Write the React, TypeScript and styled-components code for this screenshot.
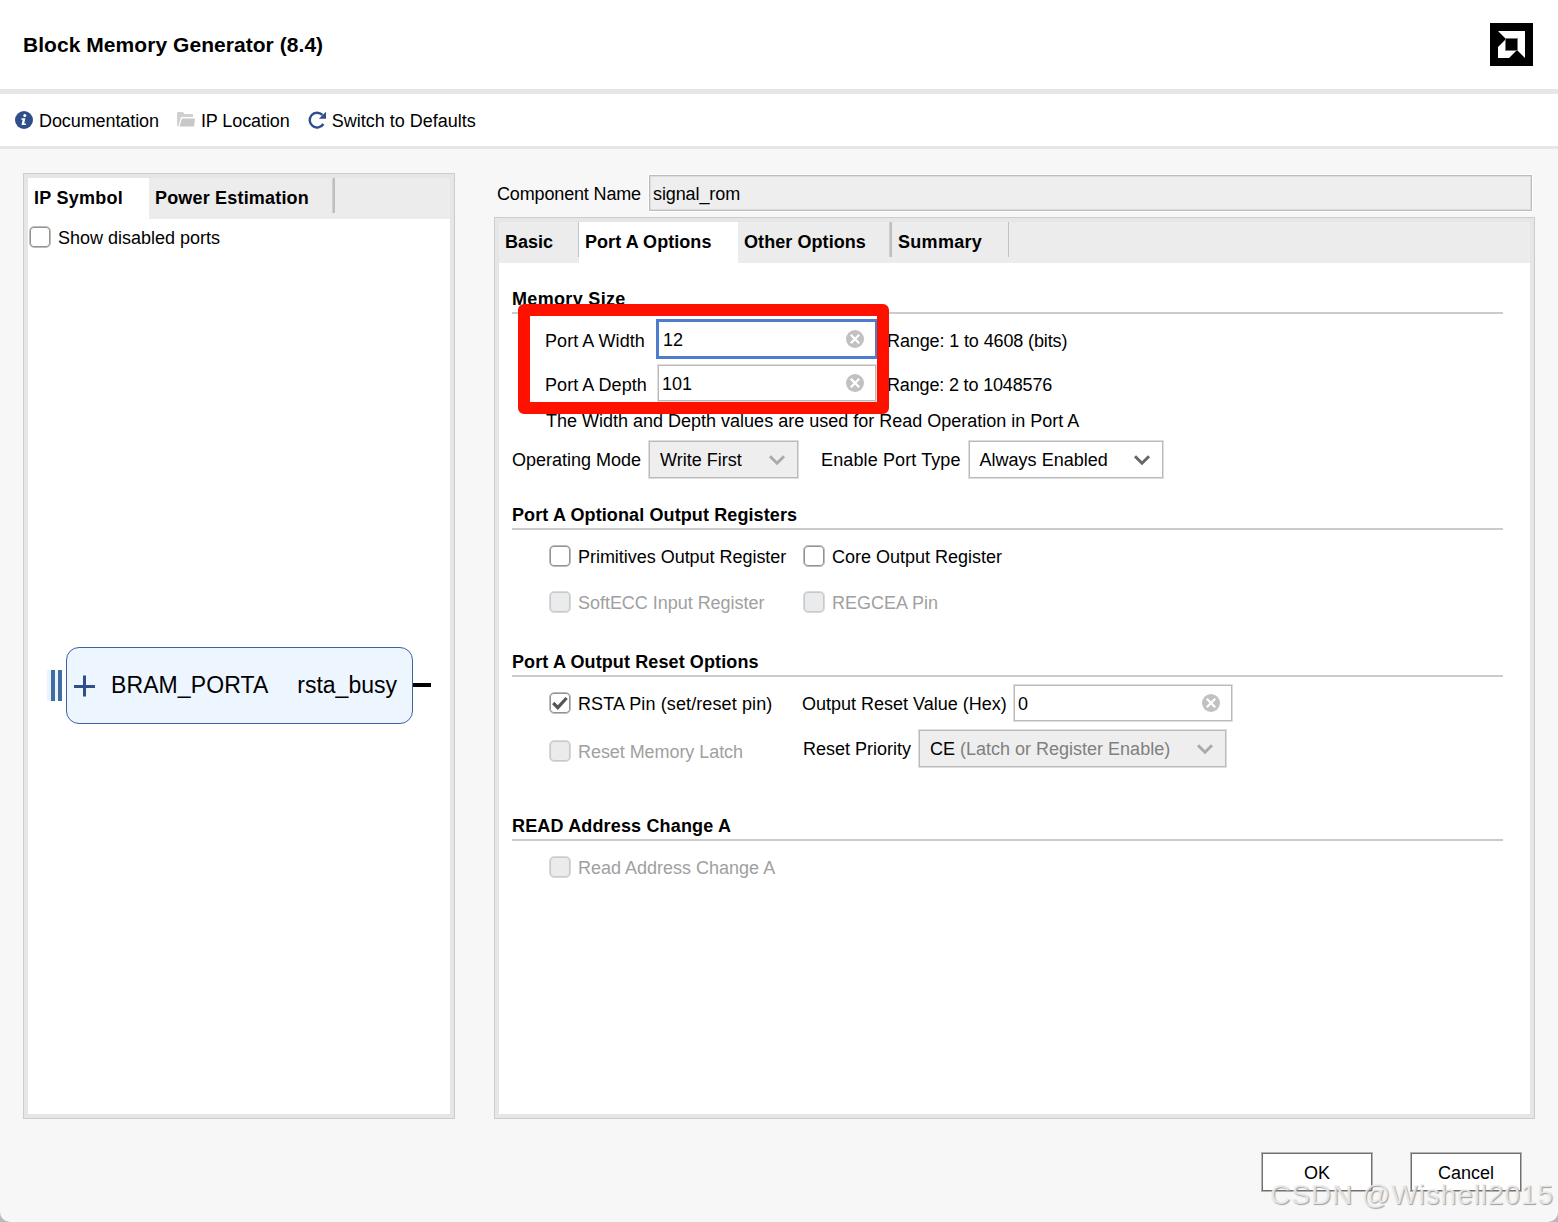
import React from "react";
import styled, { createGlobalStyle } from "styled-components";

const GlobalStyle = createGlobalStyle`
  * { box-sizing: border-box; }
  body { margin: 0; background: #b9b9b9; }
`;

const Dialog = styled.div`
  position: relative;
  display: flex;
  flex-direction: column;
  width: 1558px;
  height: 1222px;
  overflow: hidden;
  background: #f7f7f7;
  border-radius: 0 0 10px 10px;
  font-family: "Liberation Sans", Arial, sans-serif;
  font-size: 18px;
  line-height: 22px;
  color: #000;
  white-space: nowrap;
`;

const Header = styled.header`
  display: flex;
  align-items: center;
  justify-content: space-between;
  height: 94px;
  padding: 0 25px 0 23px;
  background: #fff;
  border-bottom: 5px solid #e6e6e6;
`;

const Title = styled.h1`
  margin: 0;
  font-size: 21px;
  line-height: 26px;
  letter-spacing: 0.05px;
`;

const Toolbar = styled.nav`
  display: flex;
  align-items: center;
  gap: 17px;
  height: 55px;
  padding: 0 14px;
  background: #fff;
  border-bottom: 3px solid #e6e6e6;
  letter-spacing: -0.09px;
`;

const ToolItem = styled.div`
  display: flex;
  align-items: center;
  gap: 5px;
`;

const ToolLabel = styled.span<{ $tracking?: number }>`
  padding-top: 2px;
  letter-spacing: ${(p) => p.$tracking ?? -0.09}px;
`;

const Body = styled.main`
  display: flex;
  gap: 39px;
  height: 970px;
  padding: 24px 23px 0;
`;

const Panel = styled.section`
  display: flex;
  flex-direction: column;
  flex: 1;
  min-height: 0;
  border: 1px solid #cdcdcd;
  background: #fff;
  box-shadow: inset 0 0 0 4px #e6e6e6;
  padding: 4px;
`;

const SymbolPanel = styled(Panel)`
  flex: 0 0 432px;
`;

const TabBar = styled.div`
  display: flex;
  flex: none;
  height: 41px;
  background: #ececec;
  font-weight: bold;
`;

const Tab = styled.div<{ $width: number; $active?: boolean; $divider?: number; $tracking?: number }>`
  position: relative;
  display: flex;
  align-items: center;
  width: ${(p) => p.$width}px;
  height: 41px;
  padding: 0 0 2px 6px;
  letter-spacing: ${(p) => p.$tracking ?? 0}px;
  background: ${(p) => (p.$active ? "#fff" : "transparent")};
  &::after {
    content: "";
    position: absolute;
    right: 0;
    top: 0;
    width: ${(p) => p.$divider ?? 0}px;
    height: 35px;
    background: ${(p) => (p.$divider && p.$divider > 1 ? "linear-gradient(90deg, #d0d0d0 1px, #bebebe 1px)" : "#c2c2c2")};
  }
`;

const CheckLabel = styled.div<{ $disabled?: boolean; $tracking?: number }>`
  display: flex;
  align-items: center;
  gap: 7px;
  letter-spacing: ${(p) => p.$tracking ?? 0}px;
  color: ${(p) => (p.$disabled ? "#a0a0a0" : "#000")};
`;

const Box = styled.span<{ $disabled?: boolean; $lift: number }>`
  display: flex;
  align-items: center;
  justify-content: center;
  width: 22px;
  height: 22px;
  margin-top: ${(p) => -p.$lift}px;
  border: 1px solid ${(p) => (p.$disabled ? "#dadada" : "#bdbdbd")};
  border-radius: 5px;
  box-shadow: inset 0 0 0 1px ${(p) => (p.$disabled ? "#c8c8c8" : "#929292")};
  background: ${(p) => (p.$disabled ? "#eaebec" : "#fff")};
`;

const PortsRow = styled.div`
  height: 38px;
  display: flex;
  align-items: center;
  padding-left: 1px;
`;

const SymbolCanvas = styled.div`
  display: flex;
  align-items: center;
  margin-top: 390px;
  padding-left: 19px;
`;

const BusPin = styled.div`
  width: 15px;
  height: 31px;
  margin-right: 4px;
  border-left: 4px solid #eaf4ff;
  background: linear-gradient(90deg, #3f6da1 4px, #eaf4ff 4px 7px, #3f6da1 7px);
`;

const SymbolBlock = styled.div`
  display: flex;
  align-items: center;
  width: 347px;
  height: 77px;
  padding: 0 15px 0 7px;
  border: 1px solid #3d62a3;
  border-radius: 13px;
  background: #edf5ff;
  font-size: 23px;
`;

const PortName = styled.span`
  margin-left: 15px;
  padding-bottom: 2px;
  letter-spacing: 0.1px;
  &:last-child { margin-left: auto; letter-spacing: 0; }
`;

const WirePin = styled.div`
  width: 18px;
  height: 4px;
  margin-bottom: 1px;
  background: #000;
`;

const ConfigColumn = styled.div`
  display: flex;
  flex-direction: column;
  flex: 1;
`;

const NameRow = styled.div`
  display: flex;
  align-items: center;
  height: 44px;
  padding: 0 3px 4px 3px;
`;

const NameField = styled.div`
  flex: 1;
  height: 36px;
  padding: 7px 3px 5px;
  border: 1px solid #bdbdbd;
  box-shadow: 0 0 0 1px #fff, inset 0 0 0 1px #dcdcdc;
  background: #eee;
  letter-spacing: -0.1px;
`;

const Form = styled.div`
  display: flex;
  flex-direction: column;
  padding: 24px 27px 0 13px;
`;

const Heading = styled.h2<{ $gap?: number; $tracking?: number }>`
  margin: ${(p) => p.$gap ?? 0}px 0 4px;
  padding: 1px 0 2px;
  border-bottom: 2px solid #cbcbcb;
  font-size: 18px;
  line-height: 22px;
  letter-spacing: ${(p) => p.$tracking ?? 0.11}px;
`;

const Row = styled.div<{ $height: number; $indent?: number }>`
  display: flex;
  align-items: center;
  height: ${(p) => p.$height}px;
  padding-left: ${(p) => p.$indent ?? 0}px;
`;

const Label = styled.span<{ $width?: number; $before?: number; $drop?: number; $tracking?: number }>`
  flex: none;
  width: ${(p) => (p.$width ? `${p.$width}px` : "auto")};
  margin-left: ${(p) => p.$before ?? 0}px;
  padding-top: ${(p) => p.$drop ?? 0}px;
  letter-spacing: ${(p) => p.$tracking ?? 0}px;
`;

const Input = styled.div<{ $focused?: boolean }>`
  display: flex;
  align-items: center;
  justify-content: space-between;
  width: ${(p) => (p.$focused ? 222 : 220)}px;
  height: ${(p) => (p.$focused ? 40 : 38)}px;
  margin: -2px ${(p) => (p.$focused ? -1 : 0)}px 0;
  padding: ${(p) => (p.$focused ? "1px 11px 0 4px" : "1px 12px 0 4px")};
  border: ${(p) => (p.$focused ? "3px solid #4f7dcd" : "1px solid #dedede")};
  box-shadow: ${(p) => (p.$focused ? "none" : "inset 0 0 0 1px #bababa")};
  background: #fff;
  svg { margin-bottom: 1px; }
`;

const Select = styled.div<{ $width: number; $disabled?: boolean }>`
  display: flex;
  align-items: center;
  justify-content: space-between;
  width: ${(p) => p.$width}px;
  height: 39px;
  margin: -1px 0 0 7px;
  padding: 0 12px 0 11px;
  border: 1px solid #dedede;
  box-shadow: inset 0 0 0 1px #bababa;
  background: ${(p) => (p.$disabled ? "#eee" : "#fff")};
`;

const Muted = styled.span`
  color: #808080;
`;

const Columns = styled.div`
  display: grid;
  grid-template-columns: 254px 1fr;
  padding-left: 37px;
`;

const Highlight = styled.div`
  position: absolute;
  left: 518px;
  top: 304px;
  width: 371px;
  height: 110px;
  border: 12px solid #ff1100;
  border-radius: 6px;
`;

const Footer = styled.footer`
  display: flex;
  justify-content: flex-end;
  gap: 37px;
  padding: 33px 36px 0 0;
`;

const Button = styled.button`
  width: 112px;
  height: 40px;
  padding: 2px 0 0;
  border: 1px solid #b4b4b4;
  box-shadow: inset 0 0 0 1px #707070;
  background: #fff;
  font: inherit;
  line-height: 20px;
  color: #000;
`;

const Watermark = styled.div`
  position: absolute;
  left: 1270px;
  top: 1184px;
  font-size: 28px;
  line-height: 22px;
  letter-spacing: 0.92px;
  color: rgba(238, 238, 238, 0.85);
  text-shadow: 1px 1px 1px #a0a0a0;
`;

function Logo() {
  return (
    <svg width="43" height="43" viewBox="0 0 43 43">
      <rect width="43" height="43" fill="#000" />
      <path d="M8 8H35V35L27.5 27.5V15.5H15.5Z" fill="#fff" />
      <path d="M8 24L15.5 16.5V27.5H26.5L19 35H8Z" fill="#fff" />
      <path d="M15.5 17V15.5H27.5V27.5H15.5Z" fill="none" stroke="#777" />
    </svg>
  );
}

function InfoIcon() {
  return (
    <svg width="20" height="20" viewBox="0 0 20 20">
      <circle cx="10" cy="10" r="9" fill="#304f8a" />
      <circle cx="10.8" cy="5.4" r="1.5" fill="#fff" />
      <path d="M7.6 8.2H11.4L10.2 13.4H12L11.7 15H7.5L8.6 9.8H7.3Z" fill="#fff" />
    </svg>
  );
}

function FolderIcon() {
  return (
    <svg width="20" height="20" viewBox="0 0 20 20">
      <path d="M1 16V3Q1 2 2 2H7L8.5 4H17V7H5L2.5 16Z" fill="#d0d0d0" />
      <path d="M6 8.5H19L18 16.5H3.5Z" fill="#c8c8c8" />
    </svg>
  );
}

function ResetIcon() {
  return (
    <svg width="20" height="20" viewBox="0 0 20 20">
      <path d="M15.4 4.9A7.4 7.4 0 1 0 16.4 14" fill="none" stroke="#304f8a" strokeWidth="2.4" />
      <path d="M19 1.8V8.8H11.8Z" fill="#304f8a" />
    </svg>
  );
}

function ClearIcon() {
  return (
    <svg width="18" height="18" viewBox="0 0 18 18">
      <circle cx="9" cy="9" r="9" fill="#c1c1c1" />
      <path d="M4.8 4.8L13.2 13.2M13.2 4.8L4.8 13.2" stroke="#fff" strokeWidth="2.3" />
    </svg>
  );
}

function Chevron({ color }: { color: string }) {
  return (
    <svg width="18" height="12" viewBox="0 0 18 12">
      <path d="M2 2.2L9 9.2L16 2.2" fill="none" stroke={color} strokeWidth="3" />
    </svg>
  );
}

function PlusIcon() {
  return (
    <svg width="22" height="22" viewBox="0 0 22 22">
      <path d="M10.5 0.5V21.5M0 11.5H21" stroke="#304f8a" strokeWidth="3" />
    </svg>
  );
}

type CheckboxProps = {
  label: string;
  checked?: boolean;
  disabled?: boolean;
  tracking?: number;
  drop?: number;
  lift?: number;
};

function Checkbox({ label, checked, disabled, tracking, drop, lift = 2 }: CheckboxProps) {
  return (
    <CheckLabel $disabled={disabled} $tracking={tracking}>
      <Box $disabled={disabled} $lift={lift}>
        {checked && (
          <svg width="18" height="18" viewBox="0 0 18 18">
            <path d="M2.2 9L6.8 13.6L15.6 4" fill="none" stroke="#555" strokeWidth="3.2" />
          </svg>
        )}
      </Box>
      <Label $drop={drop} $tracking={tracking}>{label}</Label>
    </CheckLabel>
  );
}

export default function App() {
  return (
    <>
      <GlobalStyle />
      <Dialog>
        <Header>
          <Title>Block Memory Generator (8.4)</Title>
          <Logo />
        </Header>
        <Toolbar>
          <ToolItem><InfoIcon /><ToolLabel>Documentation</ToolLabel></ToolItem>
          <ToolItem><FolderIcon /><ToolLabel>IP Location</ToolLabel></ToolItem>
          <ToolItem><ResetIcon /><ToolLabel $tracking={0}>Switch to Defaults</ToolLabel></ToolItem>
        </Toolbar>
        <Body>
          <SymbolPanel>
            <TabBar>
              <Tab $width={121} $active $tracking={0.25}>IP Symbol</Tab>
              <Tab $width={186} $divider={3} $tracking={0.18}>Power Estimation</Tab>
            </TabBar>
            <PortsRow><Checkbox label="Show disabled ports" /></PortsRow>
            <SymbolCanvas>
              <BusPin />
              <SymbolBlock>
                <PlusIcon />
                <PortName>BRAM_PORTA</PortName>
                <PortName>rsta_busy</PortName>
              </SymbolBlock>
              <WirePin />
            </SymbolCanvas>
          </SymbolPanel>
          <ConfigColumn>
            <NameRow>
              <Label $width={152} $drop={2} $tracking={-0.15}>Component Name</Label>
              <NameField>signal_rom</NameField>
            </NameRow>
            <Panel>
              <TabBar>
                <Tab $width={80} $divider={1}>Basic</Tab>
                <Tab $width={159} $active $tracking={0.06}>Port A Options</Tab>
                <Tab $width={154} $divider={3} $tracking={0.07}>Other Options</Tab>
                <Tab $width={117} $divider={1} $tracking={0.3}>Summary</Tab>
              </TabBar>
              <Form>
                <Heading $tracking={0.33}>Memory Size</Heading>
                <Row $height={44} $indent={33}>
                  <Label $width={112} $drop={2} $tracking={0.07}>Port A Width</Label>
                  <Input $focused>12<ClearIcon /></Input>
                  <Label $before={10} $drop={2} $tracking={-0.12}>Range: 1 to 4608 (bits)</Label>
                </Row>
                <Row $height={44} $indent={33}>
                  <Label $width={112} $drop={2} $tracking={0.07}>Port A Depth</Label>
                  <Input>101<ClearIcon /></Input>
                  <Label $before={10} $drop={2} $tracking={-0.16}>Range: 2 to 1048576</Label>
                </Row>
                <Row $height={30} $indent={34}>
                  The Width and Depth values are used for Read Operation in Port A
                </Row>
                <Row $height={48}>
                  <Label>Operating Mode</Label>
                  <Select $width={151} $disabled>Write First<Chevron color="#aaa" /></Select>
                  <Label $before={22} $tracking={0.11}>Enable Port Type</Label>
                  <Select $width={196}>Always Enabled<Chevron color="#666" /></Select>
                </Row>
                <Heading $gap={19}>Port A Optional Output Registers</Heading>
                <Columns>
                  <Row $height={45}><Checkbox label="Primitives Output Register" tracking={-0.03} /></Row>
                  <Row $height={45}><Checkbox label="Core Output Register" /></Row>
                  <Row $height={46}><Checkbox label="SoftECC Input Register" disabled drop={2} lift={0} tracking={-0.03} /></Row>
                  <Row $height={46}><Checkbox label="REGCEA Pin" disabled drop={2} lift={0} /></Row>
                </Columns>
                <Heading $gap={25}>Port A Output Reset Options</Heading>
                <Columns>
                  <div>
                    <Row $height={46}><Checkbox label="RSTA Pin (set/reset pin)" checked tracking={0.11} /></Row>
                    <Row $height={49}><Checkbox label="Reset Memory Latch" disabled tracking={-0.06} /></Row>
                  </div>
                  <div>
                    <Row $height={46}>
                      <Label $width={211} $before={-1}>Output Reset Value (Hex)</Label>
                      <Input>0<ClearIcon /></Input>
                    </Row>
                    <Row $height={44}>
                      <Label>Reset Priority</Label>
                      <Select $width={309} $disabled>
                        <span>CE <Muted>(Latch or Register Enable)</Muted></span>
                        <Chevron color="#aaa" />
                      </Select>
                    </Row>
                  </div>
                </Columns>
                <Heading $gap={38} $tracking={0.16}>READ Address Change A</Heading>
                <Columns>
                  <Row $height={44}><Checkbox label="Read Address Change A" disabled drop={2} lift={0} /></Row>
                </Columns>
              </Form>
            </Panel>
          </ConfigColumn>
        </Body>
        <Footer>
          <Button>OK</Button>
          <Button>Cancel</Button>
        </Footer>
        <Highlight />
        <Watermark>CSDN @Wishell2015</Watermark>
      </Dialog>
    </>
  );
}
